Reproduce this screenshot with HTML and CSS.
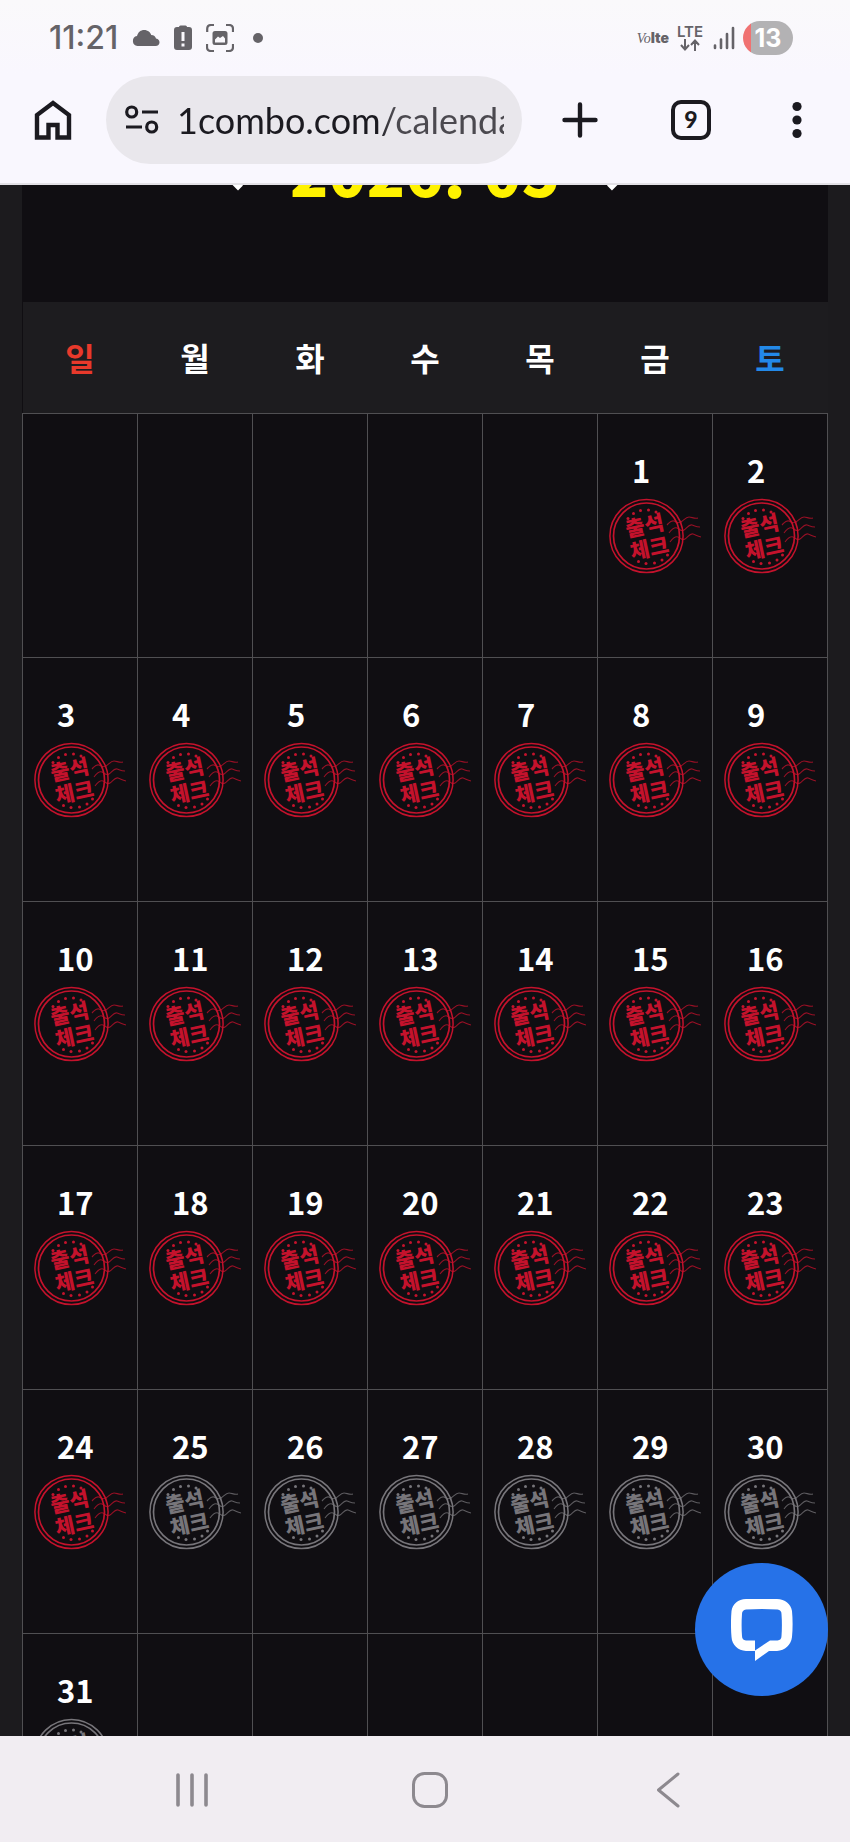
FILE: index.html
```html
<!DOCTYPE html>
<html lang="ko">
<head>
<meta charset="UTF-8">
<meta name="viewport" content="width=device-width, initial-scale=1">
<title>1combo.com/calendar</title>
<link rel="stylesheet" href="styles.css">
</head>
<body>
  <!-- 도장 아이콘 -->
  <svg class="defs" width="0" height="0" aria-hidden="true">
    <symbol id="stamp" viewBox="0 0 96 76">
      <g fill="none" stroke="currentColor">
        <circle cx="37.5" cy="38" r="36.6" stroke-width="1.5"/>
        <circle cx="37.5" cy="38" r="33" stroke-width="1.700"/>
        <path opacity=".75" stroke-width="1.1" d="M58 27c3-3 4-5 7-4s4 3 7 1 5-5 8-5 5 2 9 1M60 35c3-4 5-6 8-5s4 4 7 2 5-6 8-5 4 2 8 2M61 44c3-4 5-6 8-5s4 4 7 2 5-6 8-5 4 2 8 3"/>
      </g>
      <g fill="currentColor">
        <circle cx="19" cy="20.500" r="1.500"/><circle cx="24.500" cy="15.500" r="1.500"/><circle cx="31.500" cy="12.500" r="1.500"/><circle cx="39.500" cy="12" r="1.500"/><circle cx="47" cy="14" r="1.500"/>
        <circle cx="29.500" cy="63.500" r="1.500"/><circle cx="37" cy="65.500" r="1.500"/><circle cx="45.500" cy="65" r="1.500"/><circle cx="53" cy="62" r="1.500"/><circle cx="58.500" cy="57" r="1.500"/>
      </g>
      <g class="stamp-text" fill="currentColor" transform="rotate(-12 39 39)">
        <text x="38" y="35" text-anchor="middle">출석</text>
        <text x="38" y="58" text-anchor="middle">체크</text>
      </g>
    </symbol>
  </svg>

  <header class="browser">
    <div class="status">
      <span class="time">11:21</span>
      <svg class="cloud" width="28" height="18" viewBox="0 0 28 18"><path fill="currentColor" d="M5.500 17a5 5 0 0 1-.5-9.900C6 3 9 1 12 1c4 0 6.500 2.500 7.200 5 2.800 0 4.300 1.500 4.800 3.600 2.500.4 3.500 2 3.500 3.900s-1.500 3.500-4 3.500z"/></svg>
      <svg class="warn" width="18" height="26" viewBox="0 0 18 26"><path fill="currentColor" fill-rule="evenodd" d="M5 2q0-1.500 1.500-1.500h5Q13 .5 13 2h2q3 0 3 3v17q0 3-3 3H3q-3 0-3-3V5q0-3 3-3zM7.500 7v9h3V7zM7.500 18.500v3h3v-3z"/></svg>
      <svg class="capture" width="28" height="28" viewBox="0 0 28 28"><g fill="none" stroke="currentColor" stroke-width="2.200"><path d="M1.200 8V5q0-4 4-4H8M20 1h3q4 0 4 4v3M27 20v3q0 4-4 4h-3M8 27H5q-4 0-4-4v-3"/></g><path fill="currentColor" fill-rule="evenodd" d="M9 7h10q2.500 0 2.500 2.500v9Q21.500 21 19 21H9q-2.500 0-2.500-2.500v-9Q6.500 7 9 7zM9 18.500h10v-4l-2-2.500-3 2-2-1.500-3 3z"/></svg>
      <span class="dot"></span>
      <span class="volte"><i>Vo</i><b>lte</b></span>
      <span class="lte">LTE<svg width="20" height="12" viewBox="0 0 20 12"><path fill="none" stroke="currentColor" stroke-width="2" d="M5 0v10M1 6l4 4.500L9 6M15 12V2M11 6l4-4.500L19 6"/></svg></span>
      <svg class="signal" width="22" height="24" viewBox="0 0 22 24"><path stroke="currentColor" stroke-width="2.600" stroke-linecap="round" d="M2 19.500v2.500M8 13.500V22M14 8v14M20 2v20"/></svg>
      <span class="battery">13</span>
    </div>
    <div class="toolbar">
      <button class="icon-btn" aria-label="홈">
        <svg width="38" height="42" viewBox="0 0 38 42"><path fill="none" stroke="currentColor" stroke-width="4.400" d="M3 38.500V16L19 4l16 12v22.500H23.500V26h-9v12.500z"/></svg>
      </button>
      <label class="omnibox">
        <svg width="34" height="30" viewBox="0 0 34 30"><g fill="none" stroke="currentColor" stroke-width="3.200"><circle cx="6.700" cy="7" r="5"/><circle cx="26.700" cy="22" r="5"/><path d="M17 7h16M1 22h16"/></g></svg>
        <input class="url" type="text" value="1combo.com/calendar" aria-label="주소">
      </label>
      <button class="icon-btn" aria-label="새 탭">
        <svg width="36" height="36" viewBox="0 0 36 36"><path stroke="currentColor" stroke-width="4.400" stroke-linecap="round" d="M18 2.500v31M2.500 18h31"/></svg>
      </button>
      <button class="icon-btn"><span class="tabs">9</span></button>
      <button class="icon-btn" aria-label="메뉴">
        <svg width="10" height="38" viewBox="0 0 10 38"><g fill="currentColor"><circle cx="5" cy="5.500" r="4.600"/><circle cx="5" cy="19" r="4.600"/><circle cx="5" cy="32.500" r="4.600"/></g></svg>
      </button>
    </div>
  </header>

  <main class="page">
    <div class="month-bar">
      <button class="month-btn" aria-label="이전 달"><svg width="36" height="64" viewBox="0 0 36 64"><path fill="none" stroke="currentColor" stroke-width="7" d="M20.500 5-4 29.500 20.500 54"/></svg></button>
      <h1 class="month">2026. 05</h1>
      <button class="month-btn" aria-label="다음 달"><svg width="36" height="64" viewBox="0 0 36 64"><path fill="none" stroke="currentColor" stroke-width="7" d="M15.500 5 40 29.500 15.500 54"/></svg></button>
    </div>
    <table class="calendar">
      <thead>
        <tr><th class="sun">일</th><th>월</th><th>화</th><th>수</th><th>목</th><th>금</th><th class="sat">토</th></tr>
      </thead>
      <tbody>
        <tr>
          <td></td>
          <td></td>
          <td></td>
          <td></td>
          <td></td>
          <td><span class="day">1</span><svg class="stamp on"><use href="#stamp"/></svg></td>
          <td><span class="day">2</span><svg class="stamp on"><use href="#stamp"/></svg></td>
        </tr>
        <tr>
          <td><span class="day">3</span><svg class="stamp on"><use href="#stamp"/></svg></td>
          <td><span class="day">4</span><svg class="stamp on"><use href="#stamp"/></svg></td>
          <td><span class="day">5</span><svg class="stamp on"><use href="#stamp"/></svg></td>
          <td><span class="day">6</span><svg class="stamp on"><use href="#stamp"/></svg></td>
          <td><span class="day">7</span><svg class="stamp on"><use href="#stamp"/></svg></td>
          <td><span class="day">8</span><svg class="stamp on"><use href="#stamp"/></svg></td>
          <td><span class="day">9</span><svg class="stamp on"><use href="#stamp"/></svg></td>
        </tr>
        <tr>
          <td><span class="day">10</span><svg class="stamp on"><use href="#stamp"/></svg></td>
          <td><span class="day">11</span><svg class="stamp on"><use href="#stamp"/></svg></td>
          <td><span class="day">12</span><svg class="stamp on"><use href="#stamp"/></svg></td>
          <td><span class="day">13</span><svg class="stamp on"><use href="#stamp"/></svg></td>
          <td><span class="day">14</span><svg class="stamp on"><use href="#stamp"/></svg></td>
          <td><span class="day">15</span><svg class="stamp on"><use href="#stamp"/></svg></td>
          <td><span class="day">16</span><svg class="stamp on"><use href="#stamp"/></svg></td>
        </tr>
        <tr>
          <td><span class="day">17</span><svg class="stamp on"><use href="#stamp"/></svg></td>
          <td><span class="day">18</span><svg class="stamp on"><use href="#stamp"/></svg></td>
          <td><span class="day">19</span><svg class="stamp on"><use href="#stamp"/></svg></td>
          <td><span class="day">20</span><svg class="stamp on"><use href="#stamp"/></svg></td>
          <td><span class="day">21</span><svg class="stamp on"><use href="#stamp"/></svg></td>
          <td><span class="day">22</span><svg class="stamp on"><use href="#stamp"/></svg></td>
          <td><span class="day">23</span><svg class="stamp on"><use href="#stamp"/></svg></td>
        </tr>
        <tr>
          <td><span class="day">24</span><svg class="stamp on"><use href="#stamp"/></svg></td>
          <td><span class="day">25</span><svg class="stamp"><use href="#stamp"/></svg></td>
          <td><span class="day">26</span><svg class="stamp"><use href="#stamp"/></svg></td>
          <td><span class="day">27</span><svg class="stamp"><use href="#stamp"/></svg></td>
          <td><span class="day">28</span><svg class="stamp"><use href="#stamp"/></svg></td>
          <td><span class="day">29</span><svg class="stamp"><use href="#stamp"/></svg></td>
          <td><span class="day">30</span><svg class="stamp"><use href="#stamp"/></svg></td>
        </tr>
        <tr>
          <td><span class="day">31</span><svg class="stamp"><use href="#stamp"/></svg></td>
          <td></td>
          <td></td>
          <td></td>
          <td></td>
          <td></td>
          <td></td>
        </tr>
      </tbody>
    </table>
    <button class="chat" aria-label="채팅">
      <svg width="62" height="62" viewBox="0 0 62 62"><path fill="#fff" fill-rule="evenodd" d="M15 0h31c8 0 14 5 15 12 .8 8 .8 18 0 26-1 8-7 13.500-15 14h-8L24 62V52h-9C7 51.500 1 46 .5 38c-.7-8-.7-18 0-26C1.500 5 7 0 15 0zM15 10.500q-4 .5-4 4.500-.8 11 0 22 0 4 4 4.500h9v10l15-10h7.500q4-.5 4-4.500.8-11 0-22 0-4-4-4.500-15.500-1-31.500 0z"/></svg>
    </button>
  </main>

  <nav class="system-nav">
    <button aria-label="최근 앱"><svg width="34" height="36" viewBox="0 0 34 36"><path stroke="currentColor" stroke-width="3.600" stroke-linecap="round" d="M3 3v30M17 3v30M31 3v30"/></svg></button>
    <button aria-label="홈 화면"><svg width="38" height="38" viewBox="0 0 38 38"><rect x="2.500" y="2.500" width="33" height="33" rx="11" fill="none" stroke="currentColor" stroke-width="3"/></svg></button>
    <button aria-label="뒤로"><svg width="24" height="38" viewBox="0 0 24 38"><path fill="none" stroke="currentColor" stroke-width="3" stroke-linecap="round" stroke-linejoin="round" d="M22 3 2.500 19 22 35"/></svg></button>
  </nav>
</body>
</html>
```
FILE: styles.css
```css
* {
  box-sizing: border-box;
}

body {
  margin: 0;
  height: 100vh;
  display: flex;
  flex-direction: column;
  overflow: hidden;
  background: #1c1b1e;
  font-family: "Noto Sans CJK KR", sans-serif;
}

button {
  border: none;
  padding: 0;
  background: none;
  color: inherit;
  font: inherit;
  cursor: pointer;
}

svg {
  display: block;
}

.defs {
  position: absolute;
}

/* 브라우저 상단 */
.browser {
  flex: none;
  background: linear-gradient(#faf9fb, #f9f7fe 40%);
  border-bottom: 2px solid #e3e1e6;
  color: #1b1a20;
}

.status {
  display: flex;
  align-items: center;
  height: 75px;
  padding: 0 57px 0 49px;
  color: #656368;
  font-family: Inter, sans-serif;
}

.time {
  width: 83px;
  font-size: 32px;
  font-weight: 500;
}

.cloud,
.warn,
.capture {
  margin-right: 14px;
}

.dot {
  width: 10px;
  height: 10px;
  margin-left: 5px;
  margin-right: auto;
  border-radius: 50%;
  background: currentColor;
}

.volte {
  display: flex;
  align-items: baseline;
  margin-right: 8px;
  font-size: 14px;
}

.volte i {
  font-family: "Liberation Serif", serif;
}

.volte b {
  font-weight: 900;
}

.lte {
  display: flex;
  flex-direction: column;
  align-items: center;
  margin-right: 10px;
  font-size: 15px;
  font-weight: 600;
  line-height: 14px;
}

.signal {
  margin-right: 8px;
}

.battery {
  width: 50px;
  height: 34px;
  border-radius: 17px;
  background: linear-gradient(90deg, #f07272 8px, #b3b2b4 8px);
  color: #fff;
  font-size: 25px;
  font-weight: 700;
  line-height: 34px;
  text-align: center;
}

.toolbar {
  display: grid;
  grid-template-columns: 106px 1fr 116px 106px 106px;
  align-items: center;
  padding: 1px 0 19px;
}

.icon-btn {
  display: flex;
  align-items: center;
  justify-content: center;
  height: 88px;
}

.omnibox {
  display: flex;
  align-items: center;
  gap: 18px;
  height: 88px;
  min-width: 0;
  padding: 0 18px 0 19px;
  border-radius: 44px;
  background: #e9e7ec;
}

.omnibox svg {
  flex: none;
}

.url {
  flex: 1;
  min-width: 0;
  height: 60px;
  padding: 0;
  border: none;
  outline: none;
  background: linear-gradient(90deg, #1b1a20 200px, #4b494f 216px);
  background-clip: text;
  color: transparent;
  font-family: Lato, sans-serif;
  font-size: 36px;
}

.tabs {
  width: 40px;
  height: 40px;
  border: 4px solid currentColor;
  border-radius: 10px;
  font-family: Lato, sans-serif;
  font-size: 23px;
  font-weight: 900;
  line-height: 31px;
}

/* 달력 */
.page {
  flex: 1;
  min-height: 0;
  position: relative;
  overflow: hidden;
  padding: 0 22px;
}

.month-bar {
  display: flex;
  align-items: flex-end;
  justify-content: center;
  gap: 34px;
  height: 117px;
  padding-bottom: 92px;
  overflow: hidden;
  background: #100e12;
  color: #fff;
}

.month {
  margin: 0;
  color: #fff200;
  font-size: 63px;
  font-weight: 900;
  line-height: 80px;
}

.month-btn {
  padding-bottom: 12px;
}

.calendar {
  width: 100%;
  border-collapse: collapse;
  table-layout: fixed;
  background: #100e12;
  color: #fff;
}

.calendar th {
  height: 111px;
  padding: 0;
  background: #1d1c1f;
  font-size: 32px;
  font-weight: 700;
}

.calendar .sun {
  color: #e8392b;
}

.calendar .sat {
  color: #2389e8;
}

.calendar td {
  height: 244px;
  padding: 36px 0 0 11px;
  border: 1px solid #504f52;
  vertical-align: top;
}

.day {
  display: block;
  padding-left: 23px;
  font-size: 31px;
  font-weight: 700;
  line-height: 40px;
}

.stamp {
  width: 96px;
  height: 76px;
  margin-top: 8px;
  color: #77757a;
}

.stamp.on {
  color: #c4122c;
}

.stamp-text {
  font-size: 21px;
  font-weight: 900;
}

.chat {
  position: absolute;
  right: 22px;
  bottom: 40px;
  display: flex;
  align-items: center;
  justify-content: center;
  width: 133px;
  height: 133px;
  border-radius: 50%;
  background: #2672e8;
}

/* 하단 내비게이션 */
.system-nav {
  flex: none;
  display: grid;
  grid-template-columns: repeat(3, 1fr);
  height: 106px;
  padding: 2px 63px 0 73px;
  background: #f1edf2;
  color: #8d898f;
}

.system-nav button {
  display: flex;
  align-items: center;
  justify-content: center;
}
```
